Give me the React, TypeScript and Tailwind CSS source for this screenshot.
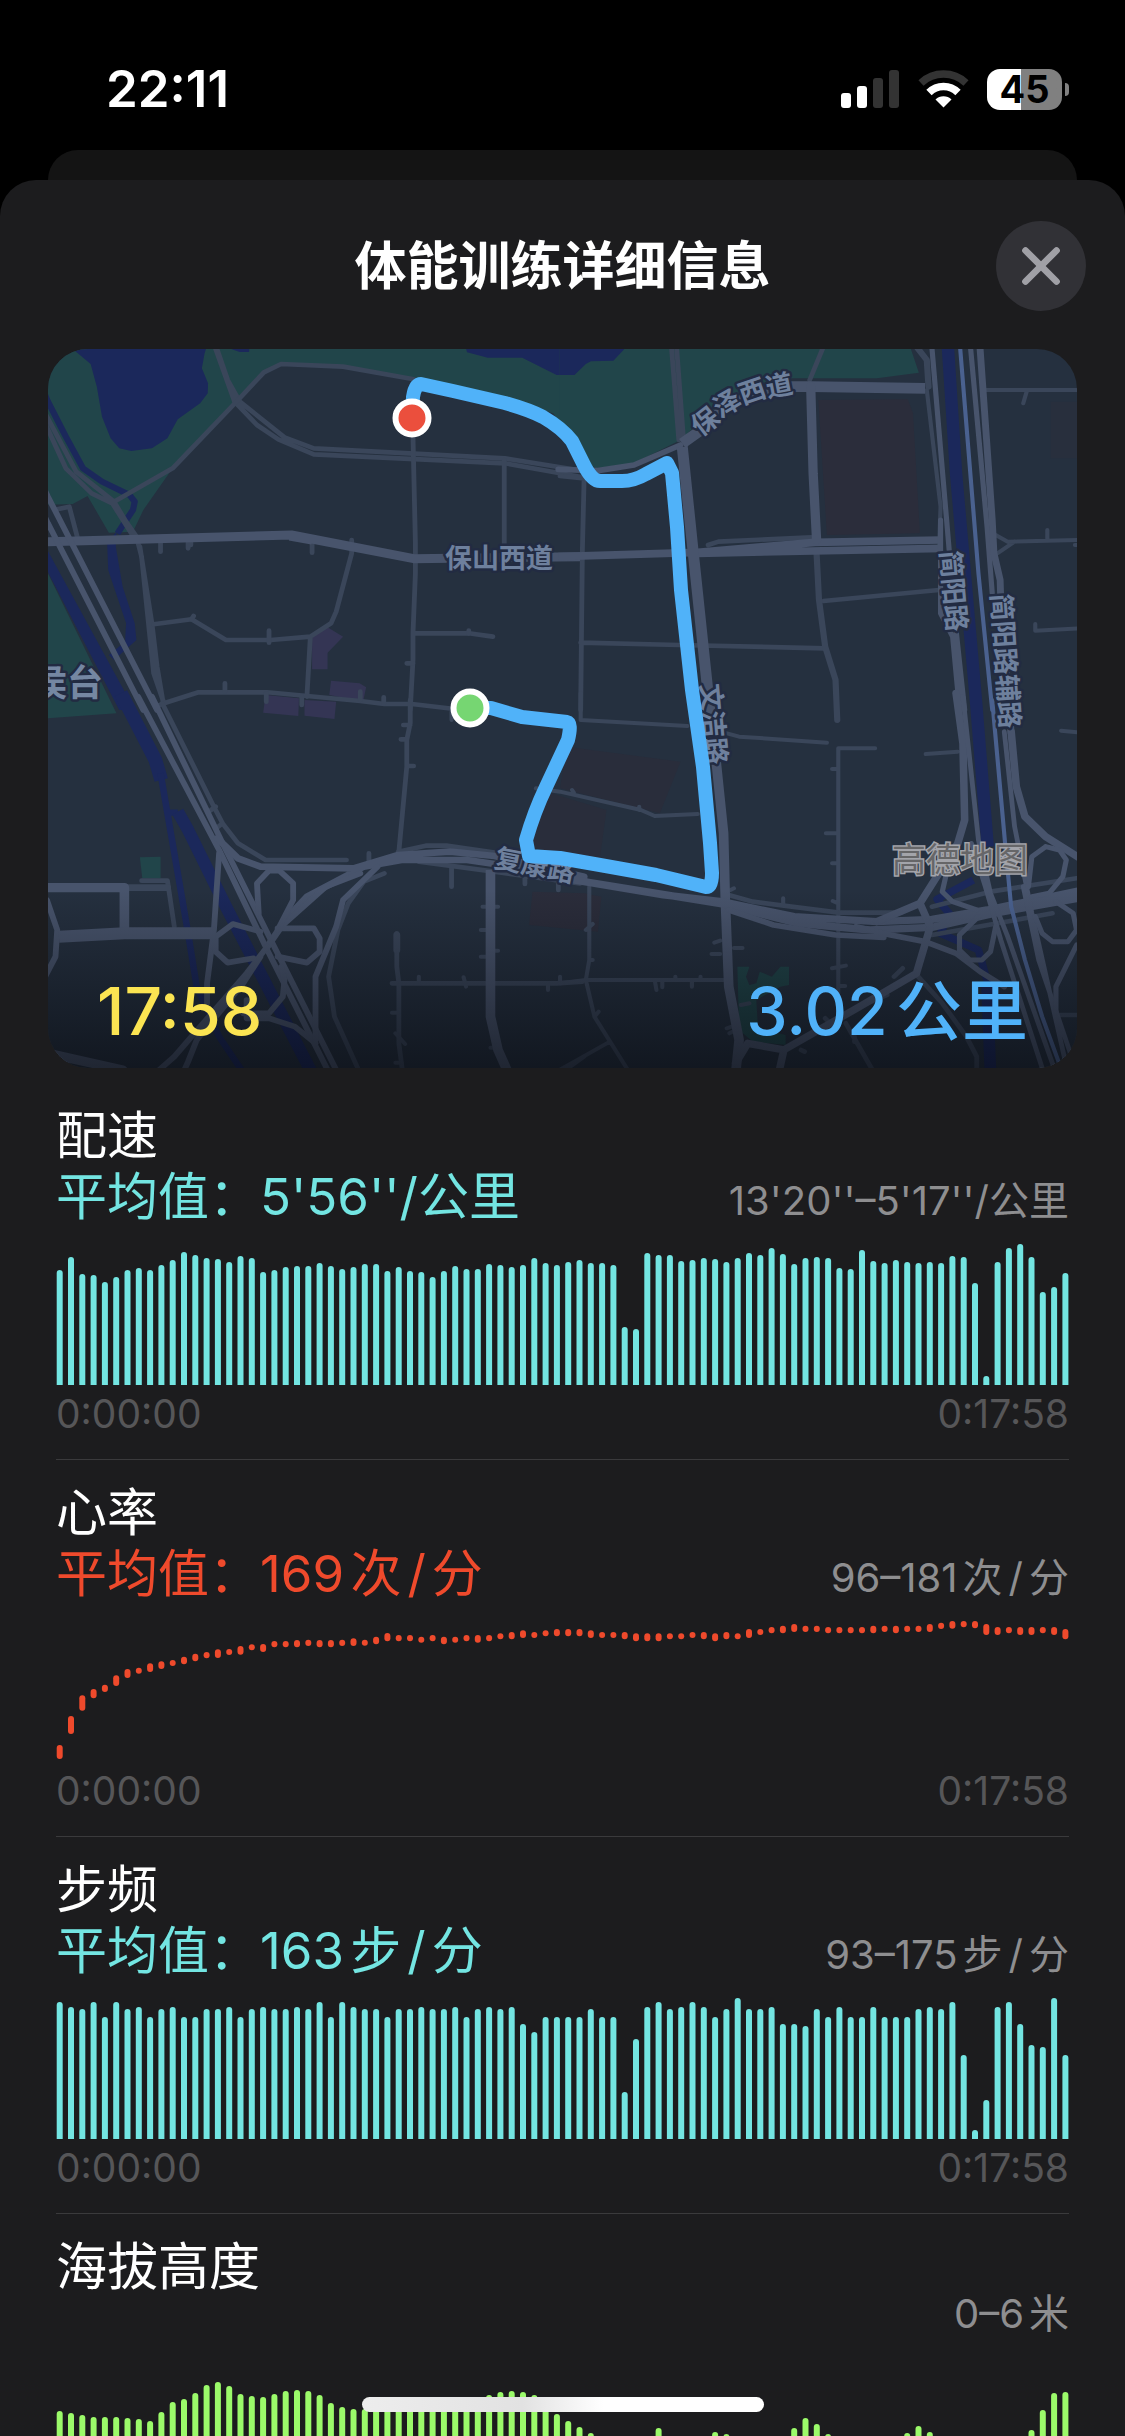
import { X } from "lucide-react";
import type { ReactNode } from "react";

const PACE = [
  115, 128, 111, 110, 103, 108, 115, 117, 115, 120, 125, 133, 130, 127, 126, 123, 129, 127, 113, 115,
  118, 119, 119, 122, 119, 116, 118, 121, 121, 114, 118, 114, 113, 108, 114, 119, 116, 116, 121, 120,
  118, 120, 127, 122, 120, 123, 125, 122, 122, 120, 58, 56, 132, 130, 130, 124, 125, 127, 126, 123,
  127, 132, 130, 137, 131, 121, 127, 128, 127, 117, 116, 135, 124, 122, 125, 123, 122, 123, 122, 129,
  128, 102, 9, 123, 137, 141, 128, 93, 98, 112,
];

const CADENCE = [
  137, 132, 130, 137, 122, 137, 130, 132, 122, 130, 132, 122, 122, 130, 130, 132, 122, 130, 132, 130,
  130, 132, 130, 137, 122, 137, 132, 130, 130, 122, 130, 130, 132, 130, 130, 132, 122, 130, 132, 130,
  132, 115, 107, 122, 122, 122, 122, 130, 122, 122, 47, 100, 132, 137, 130, 132, 137, 132, 122, 130,
  141, 130, 130, 132, 115, 115, 113, 130, 122, 132, 122, 122, 132, 122, 122, 122, 130, 132, 130, 137,
  84, 9, 39, 132, 137, 115, 94, 92, 141, 84,
];

const ALTITUDE = [
  78, 76, 74, 72, 72, 72, 71, 70, 68, 77, 87, 90, 96, 104, 107, 103, 95, 93, 92, 95, 98, 99, 98, 94,
  86, 82, 80, 80, 80, 81, 82, 83, 84, 85, 86, 88, 90, 91, 94, 97, 98, 97, 94, 86, 75, 68, 62, 56, 48,
  46, 44, 44, 48, 61, 50, 46, 44, 50, 57, 55, 48, 44, 44, 46, 50, 61, 71, 65, 55, 50, 46, 44, 44, 46,
  50, 56, 63, 57, 50, 46, 42, 40, 40, 42, 46, 50, 59, 79, 96, 97,
];

// [top, bottom] of each sample, in thirds of a pixel from the top of the chart
const HEART = [
  [372, 414], [285, 339], [223, 269], [204, 232], [191, 213], [163, 195], [144, 171], [140, 158],
  [127, 153], [121, 144], [117, 135], [107, 130], [98, 121], [93, 112], [85, 111], [84, 102],
  [75, 101], [70, 88], [69, 93], [60, 79], [60, 79], [57, 79], [56, 75], [57, 79], [57, 79],
  [56, 75], [52, 75], [56, 74], [47, 70], [36, 61], [42, 61], [42, 61], [47, 65], [42, 61],
  [47, 70], [47, 65], [42, 61], [42, 65], [42, 61], [37, 55], [33, 55], [28, 51], [33, 51],
  [28, 46], [24, 46], [24, 46], [24, 46], [28, 51], [33, 51], [33, 51], [33, 55], [37, 61],
  [37, 61], [37, 61], [37, 55], [37, 55], [33, 51], [33, 55], [37, 61], [33, 55], [37, 55],
  [24, 51], [24, 42], [18, 37], [14, 37], [9, 33], [14, 33], [14, 33], [18, 37], [18, 37],
  [18, 37], [18, 37], [14, 37], [14, 33], [14, 37], [14, 33], [14, 33], [9, 33], [5, 24],
  [0, 23], [0, 19], [0, 22], [9, 42], [18, 42], [18, 37], [18, 42], [18, 42], [18, 37],
  [18, 42], [24, 55],
];

const barX = (i: number) => 0.7 + i * 11.3;

type BarChartProps = {
  values: number[];
  color: string;
};

const BarChart = ({ values, color }: BarChartProps) => (
  <svg viewBox="0 0 1013 141" className={`block w-full ${color}`} fill="currentColor" aria-hidden="true">
    {values.map((v, i) => (
      <path key={i} d={`M${barX(i)} 141V${144 - v}a3 3 0 0 1 6 0V141Z`} />
    ))}
  </svg>
);

const HeartChart = () => (
  <svg viewBox="0 0 1013 141" className="block w-full text-[#ef4a2c]" fill="currentColor" aria-hidden="true">
    {HEART.map(([top, bottom], i) => (
      <rect key={i} x={barX(i)} y={top / 3} width={6} height={(bottom - top) / 3} rx={3} />
    ))}
  </svg>
);

type PerMinuteProps = {
  value: string;
  unit: string;
};

const PerMinute = ({ value, unit }: PerMinuteProps) => (
  <>
    {value}
    {unit}
    <span className="mx-[6px]">/</span>分
  </>
);

type MetricProps = {
  titre: string;
  average?: ReactNode;
  range: ReactNode;
  color: string;
  children: ReactNode;
};

const Metric = ({ titre, average, range, color, children }: MetricProps) => (
  <section className="border-b border-[#3a3a3c] pt-[22px] pb-[21px]">
    <h2 className="text-[51px] leading-[61px] text-white">{titre}</h2>
    <div className="mb-[17px] flex items-baseline justify-between">
      {average ? <p className={`text-[51px] leading-[61px] ${color}`}>平均值：{average}</p> : <span />}
      <p className="text-[40px] leading-[34px] text-[#8e8e90]">{range}</p>
    </div>
    {children}
    <div className="mt-[5px] flex justify-between text-[39px] leading-[48px] text-[#565658]">
      <span>0:00:00</span>
      <span>0:17:58</span>
    </div>
  </section>
);

const StatusBar = () => (
  <div className="flex h-[150px] shrink-0 items-center justify-between pt-[28px] pr-[56px] pl-[106px]">
    <span className="text-[51px] font-semibold text-white">22:11</span>
    <div className="flex items-center gap-[18px]">
      <svg width="59" height="38" viewBox="0 0 59 38" fill="#fff" aria-label="信号">
        <rect x="0" y="23" width="10" height="15" rx="3" />
        <rect x="16" y="16" width="10" height="22" rx="3" />
        <rect x="32" y="8" width="10" height="30" rx="3" fill="#333" />
        <rect x="48" y="0" width="10" height="38" rx="3" fill="#333" />
      </svg>
      <svg width="51" height="38" viewBox="0 0 51 38" fill="none" strokeWidth="7.5" aria-label="无线局域网">
        <path d="M3 12.9A33 33 0 0 1 48 12.9" stroke="#333" />
        <path d="M11 22.5A20.5 20.5 0 0 1 40 22.5" stroke="#fff" />
        <path d="M25.5 37.5 17.5 29.4A11.5 11.5 0 0 1 33.5 29.4Z" fill="#fff" />
      </svg>
      <div className="flex items-center gap-[3px]">
        <span className="flex h-[41px] w-[75px] items-center justify-center rounded-[13px] bg-linear-to-r from-white from-45% to-[#808080] to-45% text-[38px] font-bold text-black">
          45
        </span>
        <span className="h-[13px] w-[4px] rounded-r-full bg-[#808080]" />
      </div>
    </div>
  </div>
);

type TileProps = {
  x: number;
  y: number;
  children: ReactNode;
};

// Tiles are digitised at roughly three units per pixel
const Tile = ({ x, y, children }: TileProps) => (
  <g transform={`translate(${x} ${y}) scale(.3444 .3333)`}>{children}</g>
);

const WATER = "#1b285b";
const PARK = "#21454a";
const BLOCK = "#2b2d3b";
const MALL = "#343554";
const MINOR = "#3a465a";
const MAJOR = "#48546c";

const Areas = () => (
  <g strokeLinejoin="round" fill="none">
    <Tile x={40} y={340}>
      <path fill={PARK} d="M0 0H1570V330L1490 220 1300 160 1085 118 880 80 700 72 650 97 385 385 300 510 270 575 200 578 138 468 95 492 0 495ZM0 650 23 700 222 1120 0 1137Z" />
      <path fill={WATER} d="M95 27 147 72 165 140 180 230 205 295 230 325 265 333 325 325 370 295 400 238 465 190 487 160 488 130 470 85 478 40 490 0H95ZM555 0H610L607 36H580L555 27ZM1230 0H1570V88L1552 105H1500L1400 53H1300L1240 37Z" />
      <path fill={WATER} d="M222 575 195 610 198 690 250 850 247 905 200 945 215 960 280 900 275 850 240 740 220 620ZM0 590 275 1110H230L0 650Z" />
      <path stroke={WATER} strokeWidth="18" d="M0 130 23 185 75 290 125 385 180 425 260 465 275 485 270 510 225 580" />
      <path fill={MALL} d="M790 890 835 862 880 890 835 938V988H790ZM845 1022 928 1030 947 1042 938 1085 840 1065ZM655 1065 752 1075 750 1128 648 1118ZM768 1080 860 1085 855 1137 768 1127Z" />
    </Tile>
    <Tile x={560} y={340}>
      <path fill={PARK} d="M-2 0H1010L1042 98 920 115 650 115 500 170 380 270 350 300 215 370 105 385 60 360-2 240Z" />
      <path fill={WATER} d="M-2 0H187V27L155 62 90 64 75 72 42 105H-2Z" />
      <path fill={BLOCK} d="M750 180 1010 178 1025 220 1045 580 775 585Z" />
      <path fill="#282f3d" d="M1425 185H1510V355H1425Z" />
      <path stroke={WATER} strokeWidth="36" d="M1125 0 1150 400 1208 1085 1242 1520" />
    </Tile>
    <Tile x={40} y={700}>
      <path stroke={WATER} strokeWidth="40" d="M235-20 335 180 352 240" />
      <path stroke={WATER} strokeWidth="19" d="M350 220 430 700 455 860 520 1010 585 1110M365 338H400" />
      <path stroke={WATER} strokeWidth="36" d="M400 335 430 390 540 620 790 1120" />
      <path fill={PARK} d="M290 472 350 470V535H297Z" />
      <path fill={BLOCK} d="M1430 575 1580 580 1630 590 1620 695 1420 675Z" />
    </Tile>
    <Tile x={560} y={700}>
      <path fill="#292d3b" d="M20 140 350 185 290 340 0 265ZM-40 275 135 330 115 480-100 440Z" />
      <path stroke={WATER} strokeWidth="22" d="M1200 540 1095 598 1130 640 1105 700 1215 750 1245 860V1110" />
      <path stroke={WATER} strokeWidth="34" d="M1240 860 1250 1120" />
      <path fill={PARK} d="M515 800H550L540 830 550 855 570 850 580 815 615 830 640 800H665V855L640 860 570 900 575 985 655 1005V1035L560 1025 520 990Z" />
    </Tile>
  </g>
);

const Roads = () => (
  <g fill="none" strokeLinejoin="round" strokeLinecap="round">
    <g stroke={MINOR} strokeWidth="14">
      <Tile x={40} y={340}>
        <path d="M505 0 545 120 580 185 710 292 795 325 1350 355 1620 400M510 27 565 185 630 255 692 298 795 343 1350 370 1620 420" />
        <path d="M1085 118 880 80 700 72 650 97 575 180 385 385 215 485M10 210 105 395 215 485 250 545 280 590 295 650 330 1000 360 1090M15 250 75 385 150 460 210 490 265 580M290 620 325 850 340 980 358 1090" />
        <path d="M1083 290 1090 610V700L1083 880V960L1075 1110M1348 360V615M1085 880H1245L1315 890M905 600V640L860 815 845 850 785 890 670 900H540L440 838 330 853M785 890 775 1070M340 1098 360 1090 460 1057H660L930 1083 1000 1092H1080L1210 1108" />
        <path d="M350 610V635M430 605V625M438 605V615M665 872V908M537 1030V1055M657 1060V1085M760 1070V1095M930 1055V1080M998 1072V1090M1065 970H1083M50 508 85 500 108 590M790 610V638M1245 872V880M440 838 446 828" />
      </Tile>
      <Tile x={560} y={340}>
        <path d="M322 0 345 300M337 0 358 290M765 20 725 120M430 615 460 605 730 592M0 408 70 415 65 630 60 1110M60 908 345 915 770 925M765 783 1100 750" />
        <path strokeWidth="18" d="M745 640 752 780 770 920 800 1020 805 1140M1035 20 1065 60 1070 140" />
        <path strokeWidth="12" d="M1065 150 1105 500 1100 640M1235 150H1520M1355 155 1345 190M1265 585 1300 605 1520 600M1415 570V600M1270 640 1320 605M1380 852V872L1520 865M1495 615H1510" />
      </Tile>
      <Tile x={40} y={700}>
        <path d="M355 10 505 320 530 370 575 430 655 480H890M490 335 510 320M512 385 530 370M1040 455 1120 437H1180L1320 458M1075 0V70L1065 120V200L1042 455M1055 75H1075M1048 118H1065M1065 198H1085M955 460V490M1195 500V560" />
        <path d="M1100 485 1210 500 1340 518 1568 550M1408 530V552M1505 550V570M1000 520 940 545 895 610 865 690 838 830 855 950 925 1110M295 542H370L390 680M1036 700V800L1042 850V1030L1052 1110M1022 850H1500L1575 845" />
        <path strokeWidth="12" d="M1285 620H1330M1280 690H1308M1308 752H1330M1280 770H1308M1100 830V850M1230 832 1237 860M1510 830V850M1475 850V870M1022 938H1040M1032 1000 1060 1032M1032 1088H1050M1308 1043H1325M1520 1115 1580 1070M1195 35V60" />
        <path strokeWidth="20" d="M245 563H370M1036 705V750" />
      </Tile>
      <Tile x={560} y={700}>
        <path strokeWidth="12" d="M60-20V60L370 78M485 100 520 110 775 128M-70 265 0 275 235 330 275 348 400 342M35 270 40 278M230 320V330M915 145H808V880M790 207H808M772 400H808M790 490H808M792 603 808 610M790 805 830 797M808 858H828M1062 162 1155 155M1455 92 1510 98" />
        <path strokeWidth="12" d="M85 560V780L75 840 100 950 200 1115M0 850 75 840H480M145 1025-10 1115M275 840 280 870M297 840V862M335 830V840M383 840V860M408 830V840M75 690 95 672M85 780H95M100 950 112 935M448 728 465 722M440 762H465M505 744H530M525 915 550 910M484 985 505 978M492 1000 505 993M648 595V615M495 570 505 565" />
        <path d="M490 585 560 605 810 638H990L1045 610M1080 620 1250 575 1500 535M1080 705 1430 640M995 805 970 830M950 885 870 920M1040 830 1110 910 1180 1010 1210 1070V1115M830 970 910 1115M1440 945H1510M770 955 785 970M855 1025V1010M700 1050 710 1055" />
      </Tile>
    </g>
    <g stroke={MAJOR} strokeWidth="17">
      <Tile x={40} y={340}>
        <path strokeWidth="27" strokeLinecap="butt" d="M0 606 730 585 790 597 1085 656 1568 650M725 588 790 600" />
        <path d="M0 500 23 550 300 1110M0 420 23 470 340 1110" />
      </Tile>
      <Tile x={560} y={340}>
        <path strokeWidth="23" strokeLinecap="butt" d="M-5 650 400 637 740 607 1105 600M400 640 1110 625" />
        <path d="M-5 388 110 392 215 375 350 315" />
        <path strokeWidth="32" d="M355 310 410 270 480 200 560 165 650 140H730L1060 145M355 320 385 620 435 1110" strokeLinecap="butt" />
        <path strokeWidth="27" d="M728 140 735 400 745 600" />
        <path strokeWidth="15" d="M1078 0 1130 630M1105 540V820L1140 890 1160 1110M1150 870 1175 1110M1190 0 1240 560 1255 760" />
        <path strokeWidth="20" d="M1218 0 1255 540 1260 640 1278 720 1280 790 1310 1180M1285 900 1310 1180" />
        <path stroke="#4a618f" strokeWidth="12" d="M1160 0 1215 700 1255 1110" />
      </Tile>
      <Tile x={40} y={700}>
        <path d="M285-10 520 450 655 740 840 1120M325-10 535 440 675 730 865 1120" />
        <path strokeWidth="20" d="M515 415 575 475 640 500 910 505 1040 465 1190 455 1320 468 1580 530M660 740 720 650 775 590 940 500 1050 480H1240L1340 495 1580 540" />
        <path d="M700 680 830 560 930 520M660 740 600 820 440 1010 390 1070 335 1120M640 770 590 850 455 1020 430 1085 415 1120M520 460 505 690 485 850V910" />
        <path d="M635 640 630 550 665 512H695L735 550V600L690 690M640 695 560 672 510 710V755L545 788 620 775M690 685H795L812 715V755L775 788 690 770M700 800 710 840 705 890 665 940H590M600 900V955L665 955 740 980 800 1030" />
        <path d="M980 500 880 600 860 680 800 830V1020M20 600 50 690 45 770 15 830" />
        <path strokeWidth="28" strokeLinecap="butt" d="M0 563H245V690M1308 510V950L1330 1050 1360 1120" />
        <path strokeWidth="36" strokeLinecap="butt" d="M55 710 245 700H510" />
        <path strokeWidth="28" d="M0 1055 240 1110" />
      </Tile>
      <Tile x={560} y={700}>
        <path strokeWidth="28" d="M435 20 455 200 475 400 480 600 490 860 520 1020 510 1120" />
        <path strokeWidth="22" d="M0 525 40 540 300 585 470 605 680 650 920 665 1080 658 1240 630 1520 570M-20 530 470 612 690 670 900 690 1080 682 1260 640 1520 592" />
        <path d="M490 630 620 675 800 705 940 712M860 680 960 705 1060 725 1150 760 1220 815 1290 860" />
        <path strokeWidth="22" d="M1045 610 1155 430 1175 360 1170 130 1150-20M1035 820 870 920 650 1050 545 1030 510 1090M650 1050 635 1120M1045 610 1075 680 1035 820M920 665 1045 610" />
        <path strokeWidth="14" d="M1170-10 1215 420 1250 580 1300 710 1440 1120M1195 430 1235 560 1280 720 1405 1120M1290 95 1320 380 1370 640 1475 1120M1345 560 1390 780 1495 1100" />
        <path stroke="#4a618f" strokeWidth="12" d="M1255 0 1295 460 1310 620 1350 780 1400 950 1460 1120" />
        <path strokeWidth="22" d="M1310 95 1325 260 1350 350 1410 410 1510 475" />
        <path strokeWidth="15" d="M1410 440 1370 470 1360 560M1410 440 1450 450 1470 480 1460 530 1420 580 1370 590M1120 530 1110 575 1140 605 1210 630M1215 650 1160 705V750L1190 780H1225L1250 755 1265 680M1380 650 1400 700 1430 725H1475L1500 690 1490 640 1440 605M1500 735 1440 860V940" />
      </Tile>
    </g>
  </g>
);

const RouteMap = () => (
  <svg
    viewBox="48 349 1029 719"
    className="block w-full font-semibold"
    role="img"
    aria-label="路线地图"
    textAnchor="middle"
  >
    <defs>
      <linearGradient id="shade" x1="0" y1="0" x2="0" y2="1">
        <stop offset="0" stopColor="#05070c" stopOpacity="0" />
        <stop offset="1" stopColor="#05070c" stopOpacity=".6" />
      </linearGradient>
    </defs>
    <rect x="48" y="349" width="1029" height="719" fill="#25303f" />
    <Areas />
    <Roads />
    <g fill="#6e809d" stroke="#222b42" strokeWidth="5" strokeLinejoin="round" paintOrder="stroke" fontSize="27">
      <text x="499" y="568">保山西道</text>
      <text transform="translate(705 421) rotate(-38)" y="10">保</text>
      <text transform="translate(727 403) rotate(-30)" y="10">泽</text>
      <text transform="translate(752 391) rotate(-19)" y="10">西</text>
      <text transform="translate(779 385) rotate(-11)" y="10">道</text>
      <text transform="translate(954 591) rotate(85)" y="10">简阳路</text>
      <text transform="translate(1006 661) rotate(86)" y="10">简阳路辅路</text>
      <text transform="translate(714 724) rotate(85)" y="10">文洁路</text>
      <text transform="translate(535 865) rotate(11)" y="10">复康路</text>
      <text x="67" y="696" fontSize="36" fill="#7587a2">侯台</text>
    </g>
    <text x="960" y="872" fontSize="34" fontWeight="400" fill="#666668" stroke="#a3a4aa" strokeWidth="3" paintOrder="stroke">
      高德地图
    </text>
    <path
      d="M412 418 413 397Q415 384 421 384L453 391 505 403Q530 410 543 417 562 428 572 441L584 465Q592 481 600 481H622Q634 481 646 474L667 463 672 473 677 527 681 590 692 690 703 767 710 843 712 873Q712 887 706 887L656 875 600 865 560 858 529 856 526 840Q534 812 546 787L568 740Q572 723 567 722L522 717 491 708 470 708"
      fill="none"
      stroke="#50b2f9"
      strokeWidth="14"
      strokeLinejoin="round"
    />
    <circle cx="412" cy="418" r="16.5" fill="#eb4f3d" stroke="#fff" strokeWidth="6" />
    <circle cx="470" cy="708" r="16.5" fill="#76d672" stroke="#fff" strokeWidth="6" />
    <rect x="48" y="890" width="1029" height="178" fill="url(#shade)" />
  </svg>
);

export default function App() {
  return (
    <div className="relative flex h-screen flex-col overflow-hidden bg-black font-['Inter','Noto_Sans_CJK_SC',sans-serif] [text-autospace:normal]">
      <StatusBar />
      <div className="mx-[48px] h-[30px] shrink-0 rounded-t-[30px] bg-[#141414]" />
      <main className="flex min-h-0 flex-1 flex-col rounded-t-[36px] bg-[#1c1c1e]">
        <header className="grid shrink-0 grid-cols-[1fr_auto_1fr] items-center px-[39px] pt-[41px] pb-[38px]">
          <h1 className="col-start-2 text-[52px] leading-[61px] font-semibold text-white">体能训练详细信息</h1>
          <button
            type="button"
            aria-label="关闭"
            className="flex size-[90px] items-center justify-center justify-self-end rounded-full bg-[#313136] text-[#a0a0a6]"
          >
            <X size={62} strokeWidth={2.6} />
          </button>
        </header>

        <div className="min-h-0 flex-1 overflow-y-auto [scrollbar-width:none]">
          <div className="relative mx-[48px] mb-[15px] overflow-hidden rounded-[40px]">
            <RouteMap />
            <div className="absolute inset-x-0 bottom-0 flex items-baseline justify-between px-[49px] pb-[17px] text-[66px] leading-[80px] font-medium">
              <span className="text-[#fbe452]">17:58</span>
              <span className="text-[#50b2f9]">3.02公里</span>
            </div>
          </div>

          <div className="mx-[56px]">
            <Metric titre="配速" average="5'56''/公里" range="13'20''–5'17''/公里" color="text-[#73e5e2]">
              <BarChart values={PACE} color="text-[#73e5e2]" />
            </Metric>
            <Metric
              titre="心率"
              average={<PerMinute value="169" unit="次" />}
              range={<PerMinute value="96–181" unit="次" />}
              color="text-[#ef4a2c]"
            >
              <HeartChart />
            </Metric>
            <Metric
              titre="步频"
              average={<PerMinute value="163" unit="步" />}
              range={<PerMinute value="93–175" unit="步" />}
              color="text-[#73e5e2]"
            >
              <BarChart values={CADENCE} color="text-[#73e5e2]" />
            </Metric>
            <Metric titre="海拔高度" range="0–6米" color="text-[#9bfa6a]">
              <BarChart values={ALTITUDE} color="text-[#9bfa6a]" />
            </Metric>
          </div>
        </div>
      </main>
      <div className="absolute inset-x-0 bottom-[24px] flex justify-center">
        <div className="h-[15px] w-[402px] rounded-full bg-linear-to-r from-[#ededed] via-[#e2e2e2] via-40% to-white to-60%" />
      </div>
    </div>
  );
}
